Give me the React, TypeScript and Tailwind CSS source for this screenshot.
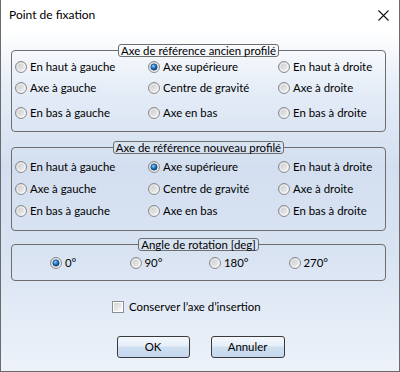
import React from "react";

const font = { fontFamily: "Lato, 'Liberation Sans', sans-serif" };

function Radio({ checked, id }: { checked?: boolean; id: string }) {
  return (
    <svg width="12" height="12" viewBox="0 0 12 12" className="shrink-0">
      <defs>
        <linearGradient id={`o-${id}`} x1="0" y1="0" x2="1" y2="1">
          <stop offset="0" stopColor="#c4c4c4" />
          <stop offset="1" stopColor="#f7f7f7" />
        </linearGradient>
        <radialGradient id={`d-${id}`} cx="0.4" cy="0.35" r="0.7">
          <stop offset="0" stopColor="#8fd0ff" />
          <stop offset="0.55" stopColor="#1b6fbf" />
          <stop offset="1" stopColor="#0b3b73" />
        </radialGradient>
      </defs>
      <circle cx="6" cy="6" r="5.5" fill={`url(#o-${id})`} stroke="#8a8d91" />
      <circle cx="6" cy="6" r="4" fill="none" stroke="#ffffff" strokeOpacity="0.6" />
      {checked && <circle cx="6" cy="6" r="3.2" fill={`url(#d-${id})`} stroke="#1c3f6b" strokeWidth="0.6" />}
    </svg>
  );
}

function Option({ label, checked, id }: { label: string; checked?: boolean; id: string }) {
  return (
    <div className="flex items-center gap-[3px] h-[20px]">
      <Radio id={id} checked={checked} />
      <span>{label}</span>
    </div>
  );
}

const labels = [
  ["En haut à gauche", "Axe supérieure", "En haut à droite"],
  ["Axe à gauche", "Centre de gravité", "Axe à droite"],
  ["En bas à gauche", "Axe en bas", "En bas à droite"],
];

function Group({ title, prefix, rowGaps, pad }: { title: string; prefix: string; rowGaps: string[]; pad: string }) {
  return (
    <fieldset className={`w-[375px] ml-[10px] border border-[#6e6e6e] rounded-[4px] ${pad}`}>
      <legend className="mx-auto px-[2px] h-[13px] leading-[11px] border border-[#6e6e6e] rounded-[3px]">{title}</legend>
      {labels.map((row, r) => (
        <div key={r} className={`grid grid-cols-[133px_130px_1fr] pl-[3px] ${rowGaps[r]}`}>
          {row.map((l, c) => (
            <Option key={l} id={`${prefix}${r}${c}`} label={l} checked={r === 0 && c === 1} />
          ))}
        </div>
      ))}
    </fieldset>
  );
}

export default function App() {
  return (
    <div
      className="w-[400px] h-[372px] border-x border-b border-[#6b6b6b] bg-white flex flex-col text-[11.4px] text-black"
      style={font}
    >
      <div className="h-[30px] shrink-0 flex items-center justify-between pl-[8px] pr-[10px] text-[12px]">
        <span>Point de fixation</span>
        <svg width="11" height="11" viewBox="0 0 11 11">
          <path d="M0.5 0.5L10.5 10.5M10.5 0.5L0.5 10.5" stroke="#111" strokeWidth="1.1" />
        </svg>
      </div>
      <div className="flex-1 flex flex-col bg-[linear-gradient(to_bottom,#ffffff_0%,#e4ecf7_18%,#d3dff0_40%,#d8e3f2_65%,#edf2fa_100%)]">
        <div className="mt-[14px]">
          <Group title="Axe de référence ancien profilé" prefix="a" rowGaps={["mt-0", "mt-[1px]", "mt-[5px]"]} pad="pb-[8px]" />
        </div>
        <div className="mt-[9px]">
          <Group title="Axe de référence nouveau profilé" prefix="b" rowGaps={["mt-[3px]", "mt-[2px]", "mt-[2px]"]} pad="pb-[9px]" />
        </div>
        <fieldset className="mt-[7px] w-[375px] ml-[10px] border border-[#6e6e6e] rounded-[4px] pt-[2px] pb-[7px]">
          <legend className="mx-auto px-[2px] h-[13px] leading-[11px] border border-[#6e6e6e] rounded-[3px]">
            Angle de rotation [deg]
          </legend>
          <div className="flex pl-[38px]">
            {["0°", "90°", "180°", "270°"].map((l, i) => (
              <div key={l} className="w-[79.5px]">
                <Option id={`c${i}`} label={l} checked={i === 0} />
              </div>
            ))}
          </div>
        </fieldset>
        <div className="mt-[16px] h-[20px] flex items-center pl-[111px] gap-[5px]">
          <svg width="12" height="12" viewBox="0 0 12 12" className="shrink-0">
            <defs>
              <linearGradient id="cb" x1="0" y1="0" x2="1" y2="1">
                <stop offset="0" stopColor="#d2d2d2" />
                <stop offset="1" stopColor="#fafafa" />
              </linearGradient>
            </defs>
            <rect x="0.5" y="0.5" width="11" height="11" fill="#ffffff" stroke="#8a8d91" />
            <rect x="2" y="2" width="8" height="8" fill="url(#cb)" />
          </svg>
          <span>Conserver l’axe d’insertion</span>
        </div>
        <div className="mt-[19px] flex justify-center gap-[21px] pl-[1px]">
          <button className="w-[73px] h-[22px] rounded-[3px] border border-[#3a3a3a] bg-[linear-gradient(to_bottom,#f3f7fc_0%,#e6eef8_45%,#cfdff1_50%,#c4d7ee_100%)]">
            OK
          </button>
          <button className="w-[74px] h-[22px] rounded-[3px] border border-[#3a3a3a] bg-[linear-gradient(to_bottom,#f3f7fc_0%,#e6eef8_45%,#cfdff1_50%,#c4d7ee_100%)]">
            Annuler
          </button>
        </div>
      </div>
    </div>
  );
}
